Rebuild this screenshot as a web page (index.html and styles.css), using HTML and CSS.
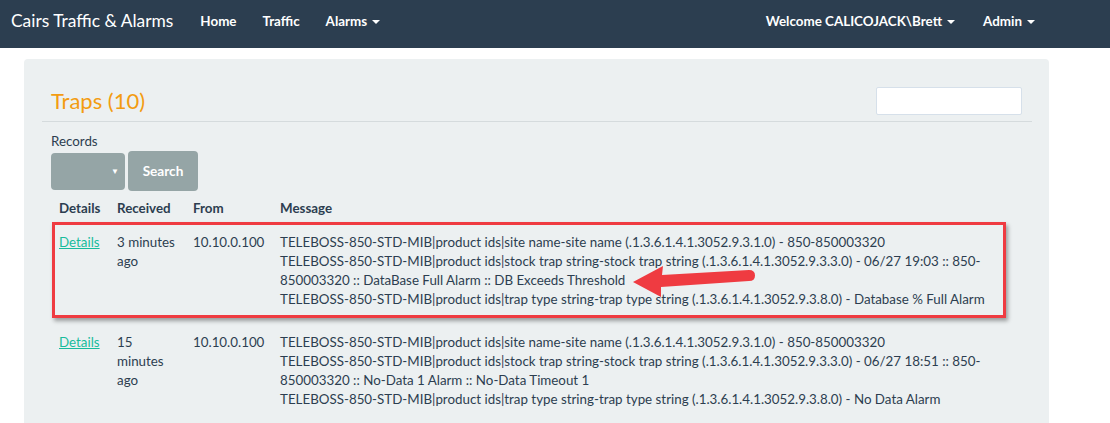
FILE: index.html
```html
<!DOCTYPE html>
<html>
<head>
<meta charset="utf-8">
<link rel="stylesheet" href="styles.css">
</head>
<body>
<nav class="navbar">
  <div class="brand">Cairs Traffic &amp; Alarms</div>
  <ul class="nav">
    <li>Home</li>
    <li>Traffic</li>
    <li>Alarms <span class="caret"></span></li>
  </ul>
  <ul class="nav nav-right">
    <li>Welcome CALICOJACK\Brett <span class="caret"></span></li>
    <li>Admin <span class="caret"></span></li>
  </ul>
</nav>

<div class="well">
  <div class="well-head">
    <h2 class="title">Traps (10)</h2>
    <input class="search-input" type="text">
  </div>
  <div class="rule"></div>
  <div class="records-label">Records</div>
  <div class="controls">
    <div class="select"><span class="select-caret">&#9660;</span></div>
    <button class="btn">Search</button>
  </div>
  <div class="table-wrap">
    <table class="traps">
      <colgroup>
        <col class="c1"><col class="c2"><col class="c3"><col>
      </colgroup>
      <thead>
        <tr>
          <th>Details</th>
          <th>Received</th>
          <th>From</th>
          <th>Message</th>
        </tr>
      </thead>
      <tbody>
        <tr>
          <td><a href="#">Details</a></td>
          <td>3 minutes ago</td>
          <td>10.10.0.100</td>
          <td>TELEBOSS-850-STD-MIB|product ids|site name-site name (.1.3.6.1.4.1.3052.9.3.1.0) - 850-850003320<br>TELEBOSS-850-STD-MIB|product ids|stock trap string-stock trap string (.1.3.6.1.4.1.3052.9.3.3.0) - 06/27 19:03 :: 850-850003320 :: DataBase Full Alarm :: DB Exceeds Threshold<br>TELEBOSS-850-STD-MIB|product ids|trap type string-trap type string (.1.3.6.1.4.1.3052.9.3.8.0) - Database % Full Alarm</td>
        </tr>
        <tr>
          <td><a href="#">Details</a></td>
          <td>15 minutes ago</td>
          <td>10.10.0.100</td>
          <td>TELEBOSS-850-STD-MIB|product ids|site name-site name (.1.3.6.1.4.1.3052.9.3.1.0) - 850-850003320<br>TELEBOSS-850-STD-MIB|product ids|stock trap string-stock trap string (.1.3.6.1.4.1.3052.9.3.3.0) - 06/27 18:51 :: 850-850003320 :: No-Data 1 Alarm :: No-Data Timeout 1<br>TELEBOSS-850-STD-MIB|product ids|trap type string-trap type string (.1.3.6.1.4.1.3052.9.3.8.0) - No Data Alarm</td>
        </tr>
      </tbody>
    </table>
    <div class="highlight-box"></div>
    <svg class="arrow" width="140" height="40" viewBox="0 0 140 40">
      <path d="M2 21 L32 5 L31 14 L118 9 Q124 9 124 14.5 Q124 20 118 20 L30 26 L30 36 Z" fill="#ef3b41"/>
    </svg>
  </div>
</div>
</body>
</html>
```

FILE: styles.css
```css
* { box-sizing: border-box; }
body {
  margin: 0;
  font-family: Lato, "Open Sans", sans-serif;
  font-size: 13.35px;
  line-height: 19px;
  color: #2c3e50;
  background: #fff;
}
.navbar {
  display: flex;
  align-items: flex-start;
  height: 48px;
  background: #2c3e50;
  color: #fff;
  padding: 0 75px 0 11px;
}
.brand {
  font-size: 17.4px;
  line-height: 42px;
}
.nav {
  list-style: none;
  margin: 0 0 0 27px;
  padding: 0;
  display: flex;
  gap: 26px;
  font-size: 13.4px;
  line-height: 42px;
  font-weight: 700;
}
.nav li { display: flex; align-items: center; gap: 5px; }
.nav-right { margin-left: auto; gap: 28px; }
.caret {
  display: inline-block;
  width: 0; height: 0;
  border-left: 4px solid transparent;
  border-right: 4px solid transparent;
  border-top: 4px solid #fff;
  margin-top: 2px;
}
.well {
  margin: 11px 0 0 24px;
  width: 1025px;
  height: 370px;
  background: #ecf0f1;
  border-radius: 4px 4px 0 0;
  padding: 0 17px 0 18px;
}
.well-head {
  display: flex;
  align-items: center;
  justify-content: space-between;
  padding: 28px 10px 6px 9px;
}
.title {
  margin: 0;
  font-size: 22px;
  line-height: 28px;
  font-weight: 400;
  color: #f39c12;
}
.search-input {
  width: 146px;
  height: 28px;
  border: 1px solid #d6e0ea;
  border-radius: 2px;
  background: #fff;
  margin: 0;
  padding: 0;
}
.rule { height: 1px; background: #d5dbdd; }
.records-label { margin: 10px 0 0 9px; }
.controls {
  display: flex;
  align-items: center;
  gap: 3px;
  margin-left: 9px;
  height: 40px;
}
.select {
  width: 74px;
  height: 37px;
  background: #95a5a6;
  border-radius: 4px;
  display: flex;
  align-items: center;
  justify-content: flex-end;
  padding-right: 6px;
}
.select-caret { color: #fff; font-size: 8px; line-height: 8px; }
.btn {
  width: 70px;
  height: 40px;
  background: #95a5a6;
  border: none;
  border-radius: 4px;
  color: #fff;
  font-family: Lato, "Open Sans", sans-serif;
  font-size: 13.6px;
  font-weight: 700;
  padding: 0;
}
.table-wrap { position: relative; margin-left: 9px; width: 955px; }
.traps {
  width: 955px;
  border-collapse: collapse;
  table-layout: fixed;
}
.traps th {
  text-align: left;
  font-weight: 700;
  padding: 8px 8px 3px;
  vertical-align: top;
}
.traps td {
  padding: 12px 8px;
  vertical-align: top;
}
.c1 { width: 58px; }
.c2 { width: 76px; }
.c3 { width: 87px; }
.traps a { color: #18bc9c; text-decoration: underline; }
.highlight-box {
  position: absolute;
  left: 1px;
  top: 31px;
  width: 954px;
  height: 96px;
  border: 3px solid #ef3b41;
  box-shadow: 2px 3px 4px rgba(0,0,0,0.35);
  pointer-events: none;
}
.arrow {
  position: absolute;
  left: 580px;
  top: 70px;
}
```
